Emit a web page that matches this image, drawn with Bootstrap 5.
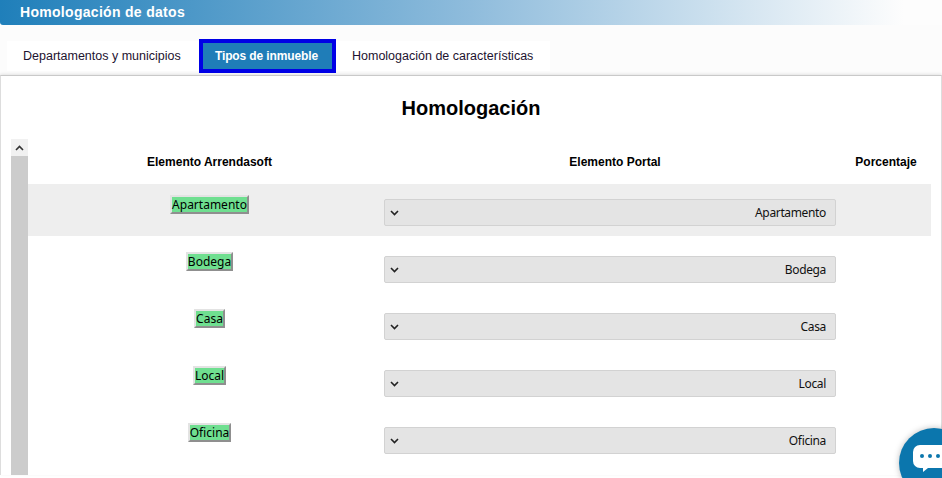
<!DOCTYPE html>
<html lang="es">
<head>
<meta charset="utf-8">
<title>Homologación de datos</title>
<link href="https://cdn.jsdelivr.net/npm/bootstrap@5.3.0/dist/css/bootstrap.min.css" rel="stylesheet">
<style>
html,body{height:478px;overflow:hidden;background:#fff;font-family:"Liberation Sans",Arial,sans-serif;color:#000}
.hd-bar{height:25px;background:linear-gradient(90deg,#1f7fba 0,#8fbcdc 50%,#fdfdfd 96%);border-bottom-left-radius:3px;color:#fff;font-weight:700;font-size:14px;line-height:24px;padding-left:20px;letter-spacing:.3px}
.tab-row{height:50px;padding:13px 0 0 7px;align-items:flex-start;background:#fcfcfc}
.tab-strip{background:#fff;height:30px;margin-top:3px;align-items:center;width:543px;position:relative}
.tab-item{font-size:12.5px;color:#1d1330;padding:0 16px;white-space:nowrap}
.tab-on{background:#1f7db8;color:#fff;font-weight:700;font-size:12px;letter-spacing:-.12px;border:4px solid #0000e6;height:34px;line-height:26px;width:137px;padding:0 2px 0 0;text-align:center;margin:0}
.tab-first{width:192px;padding-left:16px}
.tab-last{padding-left:16px}
.pane{background:#fff;border-top:1px solid #c9c9c9;border-left:1px solid #ddd;border-right:1px solid #ddd;height:400px;box-shadow:0 -1px 3px rgba(0,0,0,.1)}
.pane-title{font-size:20px;font-weight:700;text-align:center;height:63px;padding-top:20px;line-height:24px}
.scroll-wrap{padding-left:10px;padding-right:10px}
.fake-sb{width:17px;background:#ccc;flex:none;height:336px}
.fake-sb-btn{height:17px;background:#f1f1f1;display:flex;align-items:center;justify-content:center}
.grid-h{height:45px;align-items:center;font-size:12px;font-weight:700;text-align:center;padding-top:1px}
.c-a{width:362px;flex:none;padding-left:1px}
.c-b{width:450px;flex:none}
.c-c{flex:1;padding-left:1px}
.g-row{height:52px;margin-bottom:5px}
.g-row.alt{background:#eee}
.tag-cell{padding-top:11px;display:flex;justify-content:center;align-items:flex-start}
.tag-btn{background:#6fdf90;border:2px solid;border-color:#e3e3e3 #8f8f8f #8f8f8f #e3e3e3;font-family:"Noto Sans",sans-serif;font-size:12px;line-height:15px;height:19px;padding:0;color:#000}
.sel-cell{padding-top:15px}
.sel-box{margin-left:-6px;width:452px;height:27px;background:#e4e4e4;border:1px solid #d2d2d2;border-radius:2px;display:flex;align-items:center;justify-content:space-between;padding:0 9px 0 5px;font-family:"Noto Sans",sans-serif;font-size:12px;letter-spacing:-.35px;color:#111}
.chat-ball{position:fixed;left:899px;top:428px;width:70px;height:70px;border-radius:50%;background:#0b76ad;box-shadow:0 0 6px rgba(0,0,0,.25);padding:17px 0 0 14px}
</style>
</head>
<body>
<div class="hd-bar">Homologación de datos</div>
<div class="tab-row d-flex">
  <div class="tab-strip d-flex">
    <div class="tab-item tab-first">Departamentos y municipios</div>
    <div class="tab-item tab-on">Tipos de inmueble</div>
    <div class="tab-item tab-last">Homologación de características</div>
  </div>
</div>
<div class="pane">
  <div class="pane-title">Homologación</div>
  <div class="scroll-wrap d-flex">
    <div class="fake-sb">
      <div class="fake-sb-btn"><svg width="9" height="6" viewBox="0 0 9 6"><path d="M1 5l3.5-3.5L8 5" fill="none" stroke="#333" stroke-width="1.6"/></svg></div>
    </div>
    <div class="flex-grow-1">
      <div class="grid-h d-flex">
        <div class="c-a">Elemento Arrendasoft</div>
        <div class="c-b">Elemento Portal</div>
        <div class="c-c">Porcentaje</div>
      </div>
      <div class="g-row alt d-flex">
        <div class="c-a tag-cell"><span class="tag-btn">Apartamento</span></div>
        <div class="c-b sel-cell"><div class="sel-box"><svg width="9" height="6" viewBox="0 0 9 6"><path d="M1 1l3.5 3.5L8 1" fill="none" stroke="#222" stroke-width="1.6"/></svg><span>Apartamento</span></div></div>
      </div>
      <div class="g-row d-flex">
        <div class="c-a tag-cell"><span class="tag-btn">Bodega</span></div>
        <div class="c-b sel-cell"><div class="sel-box"><svg width="9" height="6" viewBox="0 0 9 6"><path d="M1 1l3.5 3.5L8 1" fill="none" stroke="#222" stroke-width="1.6"/></svg><span>Bodega</span></div></div>
      </div>
      <div class="g-row d-flex">
        <div class="c-a tag-cell"><span class="tag-btn">Casa</span></div>
        <div class="c-b sel-cell"><div class="sel-box"><svg width="9" height="6" viewBox="0 0 9 6"><path d="M1 1l3.5 3.5L8 1" fill="none" stroke="#222" stroke-width="1.6"/></svg><span>Casa</span></div></div>
      </div>
      <div class="g-row d-flex">
        <div class="c-a tag-cell"><span class="tag-btn">Local</span></div>
        <div class="c-b sel-cell"><div class="sel-box"><svg width="9" height="6" viewBox="0 0 9 6"><path d="M1 1l3.5 3.5L8 1" fill="none" stroke="#222" stroke-width="1.6"/></svg><span>Local</span></div></div>
      </div>
      <div class="g-row d-flex">
        <div class="c-a tag-cell"><span class="tag-btn">Oficina</span></div>
        <div class="c-b sel-cell"><div class="sel-box"><svg width="9" height="6" viewBox="0 0 9 6"><path d="M1 1l3.5 3.5L8 1" fill="none" stroke="#222" stroke-width="1.6"/></svg><span>Oficina</span></div></div>
      </div>
    </div>
  </div>
</div>
<div class="chat-ball"><svg width="43" height="27" viewBox="0 0 43 27" class="d-block"><path d="M7 0h30a7 7 0 0 1 7 7v9a7 7 0 0 1-7 7H15l-5 4 0-4H7a7 7 0 0 1-7-7V7a7 7 0 0 1 7-7z" fill="#fff"/><circle cx="9" cy="11" r="2" fill="#0b76ad"/><circle cx="17" cy="11" r="2" fill="#0b76ad"/><circle cx="25" cy="11" r="2" fill="#0b76ad"/></svg></div>
</body>
</html>
